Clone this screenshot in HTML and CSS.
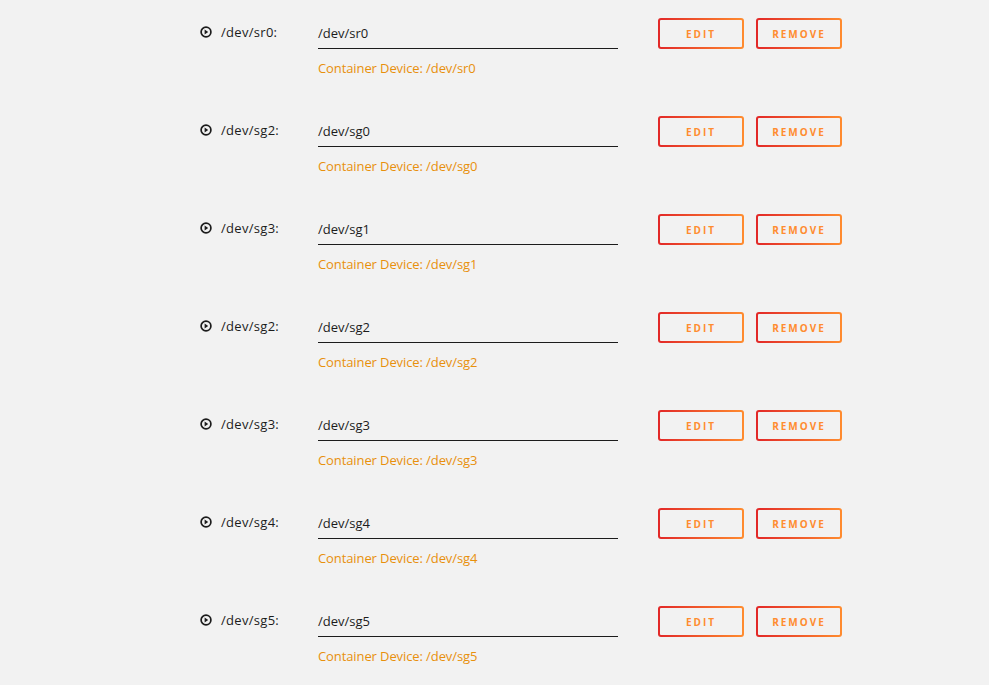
FILE: index.html
```html
<html>

<head>
  <title>Devices</title>

  <link rel="stylesheet" href="styles.css">
</head>

<body>
  <div class="devices">

    <div class="device-row">
      <div class="device-name">
        <svg class="play" viewBox="0 0 12 12"><circle cx="6" cy="6" r="4.9" /><path d="M4.6 3.6 L8.2 6 L4.6 8.4 Z" /></svg>
        <span>/dev/sr0:</span>
      </div>
      <div class="device-field">
        <div class="field-value">/dev/sr0</div>
        <div class="field-hint">Container Device: /dev/sr0</div>
      </div>
      <div class="device-actions">
        <button class="btn btn-edit">EDIT</button>
        <button class="btn btn-remove">REMOVE</button>
      </div>
    </div>

    <div class="device-row">
      <div class="device-name">
        <svg class="play" viewBox="0 0 12 12"><circle cx="6" cy="6" r="4.9" /><path d="M4.6 3.6 L8.2 6 L4.6 8.4 Z" /></svg>
        <span>/dev/sg2:</span>
      </div>
      <div class="device-field">
        <div class="field-value">/dev/sg0</div>
        <div class="field-hint">Container Device: /dev/sg0</div>
      </div>
      <div class="device-actions">
        <button class="btn btn-edit">EDIT</button>
        <button class="btn btn-remove">REMOVE</button>
      </div>
    </div>

    <div class="device-row">
      <div class="device-name">
        <svg class="play" viewBox="0 0 12 12"><circle cx="6" cy="6" r="4.9" /><path d="M4.6 3.6 L8.2 6 L4.6 8.4 Z" /></svg>
        <span>/dev/sg3:</span>
      </div>
      <div class="device-field">
        <div class="field-value">/dev/sg1</div>
        <div class="field-hint">Container Device: /dev/sg1</div>
      </div>
      <div class="device-actions">
        <button class="btn btn-edit">EDIT</button>
        <button class="btn btn-remove">REMOVE</button>
      </div>
    </div>

    <div class="device-row">
      <div class="device-name">
        <svg class="play" viewBox="0 0 12 12"><circle cx="6" cy="6" r="4.9" /><path d="M4.6 3.6 L8.2 6 L4.6 8.4 Z" /></svg>
        <span>/dev/sg2:</span>
      </div>
      <div class="device-field">
        <div class="field-value">/dev/sg2</div>
        <div class="field-hint">Container Device: /dev/sg2</div>
      </div>
      <div class="device-actions">
        <button class="btn btn-edit">EDIT</button>
        <button class="btn btn-remove">REMOVE</button>
      </div>
    </div>

    <div class="device-row">
      <div class="device-name">
        <svg class="play" viewBox="0 0 12 12"><circle cx="6" cy="6" r="4.9" /><path d="M4.6 3.6 L8.2 6 L4.6 8.4 Z" /></svg>
        <span>/dev/sg3:</span>
      </div>
      <div class="device-field">
        <div class="field-value">/dev/sg3</div>
        <div class="field-hint">Container Device: /dev/sg3</div>
      </div>
      <div class="device-actions">
        <button class="btn btn-edit">EDIT</button>
        <button class="btn btn-remove">REMOVE</button>
      </div>
    </div>

    <div class="device-row">
      <div class="device-name">
        <svg class="play" viewBox="0 0 12 12"><circle cx="6" cy="6" r="4.9" /><path d="M4.6 3.6 L8.2 6 L4.6 8.4 Z" /></svg>
        <span>/dev/sg4:</span>
      </div>
      <div class="device-field">
        <div class="field-value">/dev/sg4</div>
        <div class="field-hint">Container Device: /dev/sg4</div>
      </div>
      <div class="device-actions">
        <button class="btn btn-edit">EDIT</button>
        <button class="btn btn-remove">REMOVE</button>
      </div>
    </div>

    <div class="device-row">
      <div class="device-name">
        <svg class="play" viewBox="0 0 12 12"><circle cx="6" cy="6" r="4.9" /><path d="M4.6 3.6 L8.2 6 L4.6 8.4 Z" /></svg>
        <span>/dev/sg5:</span>
      </div>
      <div class="device-field">
        <div class="field-value">/dev/sg5</div>
        <div class="field-hint">Container Device: /dev/sg5</div>
      </div>
      <div class="device-actions">
        <button class="btn btn-edit">EDIT</button>
        <button class="btn btn-remove">REMOVE</button>
      </div>
    </div>

  </div>
</body>

</html>
```

FILE: styles.css
```css
body {
  margin: 0;
  background-color: #f2f2f2;
  color: #1c1c1c;
  font-family: "Open Sans", "Noto Sans", sans-serif;
  font-size: 13px;
}

.devices {
  padding-top: 18px;
  padding-left: 200px;
}

.device-row {
  display: flex;
  height: 98px;
}

.device-name {
  width: 118px;
  height: 30px;
  display: flex;
  align-items: center;
  gap: 9px;
  margin-top: -1px;
}

.device-name span {
  letter-spacing: 0.3px;
}

.play {
  width: 12px;
  height: 12px;
}

.play circle {
  fill: none;
  stroke: #1c1c1c;
  stroke-width: 1.7;
}

.play path {
  fill: #1c1c1c;
}

.device-field {
  width: 300px;
}

.field-value {
  height: 30px;
  line-height: 30px;
  border-bottom: 1px solid #1c1c1c;
}

.field-hint {
  margin-top: 9px;
  line-height: 20px;
  color: #e8900c;
  letter-spacing: -0.1px;
}

.device-actions {
  display: flex;
  gap: 12px;
  margin-left: 40px;
  align-items: flex-start;
}

.btn {
  height: 31px;
  border: 2px solid transparent;
  border-radius: 3px;
  background:
    linear-gradient(#f2f2f2, #f2f2f2) padding-box,
    linear-gradient(90deg, #e22828, #ff8c2f) border-box;
  color: #ff8c2f;
  font-family: "Open Sans", sans-serif;
  font-weight: 700;
  font-size: 10px;
  letter-spacing: 2px;
  padding: 0;
  cursor: pointer;
}

.btn-edit {
  width: 86px;
}

.btn-remove {
  width: 86px;
}
```
